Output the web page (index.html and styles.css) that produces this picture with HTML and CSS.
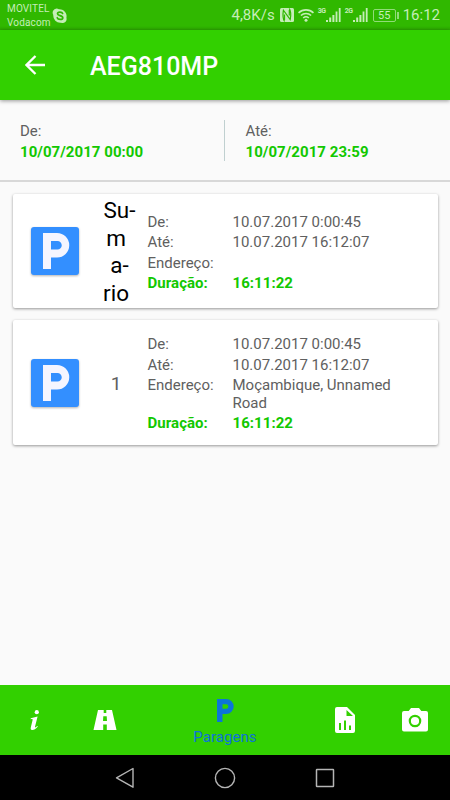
FILE: index.html
```html
<!DOCTYPE html>
<html lang="pt">
<head>
  <meta charset="UTF-8" />
  <meta name="viewport" content="width=device-width, initial-scale=1.0"/>
  <title>AEG810MP - Paragens</title>
  <link rel="stylesheet" href="styles.css">
</head>
<body>
  <div class="status">
    <div class="carriers"><div>MOVITEL</div><div>Vodacom</div></div>
    <svg class="skype" width="16" height="16" viewBox="0 0 16 16">
      <path fill="#c5edb8" d="M4.500.5a4 4 0 0 1 2.400.8 7 7 0 0 1 7.500 8.500 4 4 0 0 1-5.300 4.900A7 7 0 0 1 1.300 6.900 4.200 4.200 0 0 1 4.500.5z"/>
      <path fill="none" stroke="#30b800" stroke-width="1.7" stroke-linecap="round" d="M10.600 5.500C10 3.600 5.500 3.500 5.500 5.800c0 2.200 5.300 1.500 5.300 3.900 0 2.300-4.900 2.300-5.600 0"/>
    </svg>
    <span class="speed">4,8K/s</span>
    <svg class="nfc" width="14" height="14" viewBox="0 0 14 14">
      <rect width="14" height="14" rx="1.5" fill="#c5edb8"/>
      <path fill="none" stroke="#30b800" stroke-width="1.2" d="M4.600 13.500C2.800 11 2.800 6 3.400 2.200l6.800 9.300C10.900 8 10.900 3 9.300.5M4.500 6.500v5.500M9.300 2v5.500"/>
    </svg>
    <svg class="wifi" width="16" height="14" viewBox="0 0 16 14">
      <g fill="none" stroke="#c5edb8" stroke-width="1.6">
        <path d="M.5 4.800a11 11 0 0 1 15 0"/>
        <path d="M2.900 7.500a7.500 7.500 0 0 1 10.200 0"/>
        <path d="M5.200 10a4.200 4.200 0 0 1 5.600 0"/>
      </g>
      <circle cx="8" cy="12.2" r="1.5" fill="#c5edb8"/>
    </svg>
    <span class="net">3G</span>
    <svg class="signal" width="15" height="14" viewBox="0 0 15 14">
      <path fill="#c5edb8" d="M0 12h2v2H0zM3.200 9.500h2V14h-2zM6.400 7h2v7h-2zM9.600 3.500h1.800V14H9.600zM12.800 0h1.800v14h-1.800z"/>
    </svg>
    <span class="net second">2G</span>
    <svg class="signal" width="15" height="14" viewBox="0 0 15 14">
      <path fill="#c5edb8" d="M0 12h2v2H0zM3.200 9.500h2V14h-2zM6.400 7h2v7h-2zM9.600 3.500h1.800V14H9.600zM12.800 0h1.800v14h-1.800z"/>
    </svg>
    <span class="battery">55</span>
    <span class="battery-tip"></span>
    <span class="clock">16:12</span>
  </div>

  <header class="toolbar">
    <svg class="back" width="20" height="20" viewBox="0 0 20 20">
      <path fill="none" stroke="#fff" stroke-width="2.3" d="M20 10H2M10.500 1l-9 9 9 9"/>
    </svg>
    <h1>AEG810MP</h1>
  </header>

  <div class="period">
    <div class="date">
      <div>De:</div>
      <strong>10/07/2017 00:00</strong>
    </div>
    <div class="date until">
      <div>Até:</div>
      <strong>10/07/2017 23:59</strong>
    </div>
  </div>

  <main class="list">
    <div class="card summary">
      <svg class="parking" width="48" height="48" viewBox="0 0 48 48">
        <rect width="48" height="48" rx="3" fill="#338fff"/>
        <path fill="#f5f5ff" fill-rule="evenodd" d="M12 6h14a12.200 12.200 0 0 1 0 24.500h-6V42h-8zM20 14v8.500h6.500a4.250 4.250 0 0 0 0-8.500z"/>
      </svg>
      <div class="label">
        <div class="wide">Su-</div>
        <div>m</div>
        <div class="wide">a-</div>
        <div>rio</div>
      </div>
      <div class="info">
        <div class="row"><span>De:</span><span>10.07.2017 0:00:45</span></div>
        <div class="row"><span>Até:</span><span>10.07.2017 16:12:07</span></div>
        <div class="row"><span>Endereço:</span><span></span></div>
        <div class="row total"><span>Duração:</span><span>16:11:22</span></div>
      </div>
    </div>

    <div class="card">
      <svg class="parking" width="48" height="48" viewBox="0 0 48 48">
        <rect width="48" height="48" rx="3" fill="#338fff"/>
        <path fill="#f5f5ff" fill-rule="evenodd" d="M12 6h14a12.200 12.200 0 0 1 0 24.500h-6V42h-8zM20 14v8.500h6.500a4.250 4.250 0 0 0 0-8.500z"/>
      </svg>
      <div class="number">1</div>
      <div class="info">
        <div class="row"><span>De:</span><span>10.07.2017 0:00:45</span></div>
        <div class="row"><span>Até:</span><span>10.07.2017 16:12:07</span></div>
        <div class="row"><span>Endereço:</span><span>Moçambique, Unnamed Road</span></div>
        <div class="row total"><span>Duração:</span><span>16:11:22</span></div>
      </div>
    </div>
  </main>

  <nav class="tabs">
    <div class="tab">
      <svg width="10" height="22" viewBox="0 0 10 22">
        <circle cx="6.800" cy="3.200" r="2.100" fill="#fff"/>
        <path fill="#fff" d="M.8 9.300l6.800-1.700-2.600 10.200c-.2 1 .7.700 2.300-.8l.6.600C5.700 20.300 3.600 21.300 2.100 21.100c-1.400-.2-1.600-1.300-1.300-2.500L2.600 11c.2-.9-.4-1-1.900-.8z"/>
      </svg>
    </div>
    <div class="tab">
      <svg width="24" height="20" viewBox="0 0 24 20">
        <path fill="#fff" fill-rule="evenodd" d="M5 0h5.700v3h2.600V0H19l4.500 20H13.800v-5.500h-3.600V20H.5zM10.300 6.300l-.3 4.700h4l-.3-4.700z"/>
      </svg>
    </div>
    <div class="tab active">
      <svg width="17" height="23" viewBox="0 0 17 23">
        <path fill="#0c74d8" fill-rule="evenodd" d="M0 0h9.200a7.500 7.500 0 0 1 0 15H5.500v8H0zM5.500 5.200v4.600h3.600a2.300 2.300 0 0 0 0-4.600z"/>
      </svg>
      <span>Paragens</span>
    </div>
    <div class="tab">
      <svg width="20" height="26" viewBox="0 0 20 26">
        <path fill="#fff" fill-rule="evenodd" d="M2 0h10l8 8v16a2 2 0 0 1-2 2H2a2 2 0 0 1-2-2V2a2 2 0 0 1 2-2zM11.500 3v6H18zM4 16v7h2v-7zM9 13.500V23h2v-9.500zM14 18.500V23h2v-4.500z"/>
      </svg>
    </div>
    <div class="tab">
      <svg width="26" height="24" viewBox="0 0 26 24">
        <path fill="#fff" d="M9 0h8l2.300 3H24a2 2 0 0 1 2 2v16.500a2 2 0 0 1-2 2H2a2 2 0 0 1-2-2V5a2 2 0 0 1 2-2h4.700z"/>
        <circle cx="13" cy="13" r="5.200" fill="none" stroke="#32d000" stroke-width="2.2"/>
      </svg>
    </div>
  </nav>

  <div class="system">
    <svg width="20" height="22" viewBox="0 0 20 22">
      <path fill="none" stroke="#b5b5b5" stroke-width="1.4" stroke-linejoin="round" d="M18 1.500v18.700L1.500 10.800z"/>
    </svg>
    <svg width="22" height="22" viewBox="0 0 22 22">
      <circle cx="11" cy="11" r="9.600" fill="none" stroke="#b5b5b5" stroke-width="1.4"/>
    </svg>
    <svg width="20" height="20" viewBox="0 0 20 20">
      <rect x="1.500" y="1.500" width="17" height="17" rx=".5" fill="none" stroke="#b5b5b5" stroke-width="1.5"/>
    </svg>
  </div>
</body>
</html>
```

FILE: styles.css
```css
* { margin: 0; padding: 0; box-sizing: border-box; }
body {
  width: 450px;
  height: 800px;
  display: flex;
  flex-direction: column;
  overflow: hidden;
  background: #fafafa;
  color: #606060;
  font-family: Roboto, sans-serif;
  font-size: 15px;
  line-height: 17.6px;
}
svg {
  display: block;
  flex: none;
}
.status {
  height: 30px;
  flex: none;
  display: flex;
  align-items: center;
  padding: 0 10px 0 7px;
  background: linear-gradient(#30b800 26px, #2ca800);
  color: #c5edb8;
}
.carriers {
  width: 45px;
  font-size: 10px;
  line-height: 14px;
  padding-top: 2px;
  letter-spacing: 0.15px;
  white-space: nowrap;
}
.skype {
  margin-top: 1px;
}
.speed {
  margin-left: auto;
  padding-top: 2px;
  font-size: 15px;
}
.nfc {
  margin-left: 5px;
}
.wifi {
  margin: 0 4px;
}
.net {
  align-self: flex-start;
  width: 8px;
  margin-top: 8px;
  font-size: 7px;
  line-height: 7px;
  font-weight: bold;
  letter-spacing: -0.5px;
}
.second {
  margin-left: 4px;
}
.battery {
  width: 23px;
  height: 13px;
  margin-left: 5px;
  border: 1px solid #90dc78;
  border-radius: 2px;
  font-size: 11px;
  line-height: 11px;
  text-align: center;
}
.battery-tip {
  width: 2px;
  height: 7px;
  margin-left: 1px;
  background: #90dc78;
}
.clock {
  margin-left: 4px;
  padding-top: 2px;
  font-size: 15px;
}
.toolbar {
  height: 70px;
  flex: none;
  display: flex;
  align-items: center;
  padding: 0 25px;
  background: #32d000;
  color: #fff;
  box-shadow: 0 1px 4px rgba(0, 0, 0, 0.4);
}
h1 {
  margin: 3px 0 0 45px;
  font-size: 25px;
  font-weight: 500;
  line-height: 30px;
}
.period {
  height: 82px;
  flex: none;
  display: grid;
  grid-template-columns: 224px 1fr;
  padding-top: 20px;
  border-bottom: 2px solid #d8d8d8;
}
.date {
  height: 41px;
  padding: 1px 20px 0;
  line-height: 20.5px;
}
.date strong,
.total {
  color: #12c800;
  font-weight: bold;
  letter-spacing: 0.05px;
}
.until {
  padding-left: 20.5px;
  border-left: 1px solid #c0d0d0;
}
.list {
  flex: 1;
  padding: 12px 12.5px;
}
.card {
  height: 125px;
  display: grid;
  grid-template-columns: 48px 52px 1fr;
  align-items: center;
  padding: 0 16px 0 18.5px;
  margin-bottom: 12px;
  background: #fff;
  border-radius: 2px;
  box-shadow: 0 1px 3px rgba(0, 0, 0, 0.4);
}
.summary {
  height: 114px;
}
.parking {
  filter: drop-shadow(0 1px 1px rgba(0, 0, 0, 0.3));
}
.label {
  padding: 2px 0 0 23px;
  color: #000;
  font-size: 22.5px;
  line-height: 27.5px;
}
.label div {
  width: 28px;
  display: flex;
  justify-content: center;
}
.label .wide {
  width: 35px;
}
.number {
  padding: 3px 0 0 23px;
  width: 51px;
  font-size: 19px;
  text-align: center;
}
.info {
  padding: 7px 0 0 16.5px;
}
.row {
  display: grid;
  grid-template-columns: 85px 1fr;
  padding-bottom: 2.9px;
}
.tabs {
  height: 70px;
  flex: none;
  display: grid;
  grid-template-columns: 70px 70px 170px 70px 70px;
  background: #32d000;
}
.tab {
  display: flex;
  flex-direction: column;
  align-items: center;
  justify-content: center;
}
.active {
  justify-content: flex-start;
  padding-top: 14px;
  color: #0c74d8;
}
.active span {
  margin-top: 7px;
  letter-spacing: 0.05px;
}
.system {
  height: 45px;
  flex: none;
  display: flex;
  align-items: center;
  justify-content: center;
  gap: 79px;
  background: #000;
}
```
